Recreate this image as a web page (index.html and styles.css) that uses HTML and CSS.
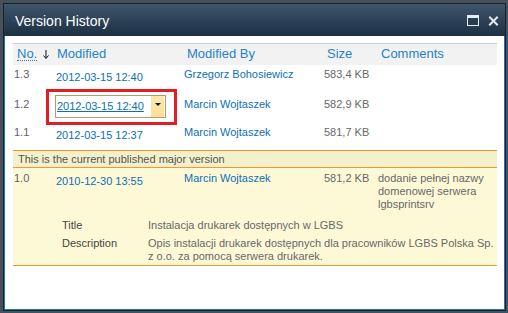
FILE: index.html
```html
<!DOCTYPE html>
<html>
<head>
<meta charset="utf-8">
<link rel="stylesheet" href="styles.css">
</head>
<body>
<div class="dialog">
  <div class="titlebar">
    <span class="title">Version History</span>
    <div class="tools">
      <svg class="ico-max" width="12" height="11" viewBox="0 0 12 11">
        <rect x="0.5" y="0.5" width="11" height="10" fill="#2a3d50" stroke="#e8ecf0" stroke-width="1"/>
        <rect x="1" y="1" width="10" height="2" fill="#e8ecf0"/>
      </svg>
      <svg class="ico-close" width="11" height="10" viewBox="0 0 11 10">
        <path d="M2 1.5 L9 8.5 M9 1.5 L2 8.5" stroke="#e6e9ec" stroke-width="2" stroke-linecap="square"/>
      </svg>
    </div>
  </div>
  <div class="content">
    <table class="versions">
      <colgroup>
        <col class="w-no"><col class="w-mod"><col class="w-by"><col class="w-size"><col class="w-com">
      </colgroup>
      <thead>
        <tr class="hdr">
          <th class="h-no"><span class="no">No.</span><svg class="sort" width="6" height="9" viewBox="0 0 6 9"><path d="M3 0 V8 M0.5 5.5 L3 8.5 L5.5 5.5" stroke="#111" stroke-width="1" fill="none"/></svg></th>
          <th class="h-mod">Modified</th>
          <th class="h-by">Modified By</th>
          <th class="h-size">Size</th>
          <th class="h-com">Comments</th>
        </tr>
      </thead>
      <tbody>
        <tr class="row r1">
          <td class="ver">1.3</td>
          <td class="date"><a>2012-03-15 12:40</a></td>
          <td class="by"><a>Grzegorz Bohosiewicz</a></td>
          <td class="size">583,4 KB</td>
          <td class="com"></td>
        </tr>
        <tr class="row r2">
          <td class="ver">1.2</td>
          <td class="date">
            <span class="hover">
              <a class="ul">2012-03-15 12:40</a>
              <span class="menu-btn"><span class="tri"></span></span>
              <span class="mark"></span>
            </span>
          </td>
          <td class="by"><a>Marcin Wojtaszek</a></td>
          <td class="size">582,9 KB</td>
          <td class="com"></td>
        </tr>
        <tr class="row r3">
          <td class="ver">1.1</td>
          <td class="date"><a>2012-03-15 12:37</a></td>
          <td class="by"><a>Marcin Wojtaszek</a></td>
          <td class="size">581,7 KB</td>
          <td class="com"></td>
        </tr>
        <tr class="spacer"><td colspan="5"></td></tr>
        <tr class="band"><td colspan="5">This is the current published major version</td></tr>
        <tr class="row major">
          <td class="ver">1.0</td>
          <td class="date"><a>2010-12-30 13:55</a></td>
          <td class="by"><a>Marcin Wojtaszek</a></td>
          <td class="size">581,2 KB</td>
          <td class="com">dodanie pełnej nazwy domenowej serwera lgbsprintsrv</td>
        </tr>
        <tr class="props">
          <td colspan="5">
            <div class="props-grid">
              <div class="lbl">Title</div>
              <div class="val">Instalacja drukarek dostępnych w LGBS</div>
              <div class="lbl">Description</div>
              <div class="val">Opis instalacji drukarek dostępnych dla pracowników LGBS Polska Sp. z o.o. za pomocą serwera drukarek.</div>
            </div>
          </td>
        </tr>
      </tbody>
    </table>
  </div>
</div>
</body>
</html>
```

FILE: styles.css
```css
* { box-sizing: border-box; }
html, body { margin: 0; padding: 0; }
body {
  width: 508px;
  height: 313px;
  background: #46515c;
  font-family: "Liberation Sans", Arial, sans-serif;
  overflow: hidden;
}
.dialog {
  margin: 3px 0 0 3px;
  width: 503px;
  height: 308px;
  border: 1px solid #17222d;
  display: flex;
  flex-direction: column;
}
.titlebar {
  height: 32px;
  flex: none;
  background: linear-gradient(#3f556a, #1d3044);
  display: flex;
  align-items: center;
  justify-content: space-between;
  padding: 0 6px 0 11px;
}
.title {
  color: #fff;
  font-size: 14px;
  margin-top: 2px;
}
.tools {
  display: flex;
  align-items: center;
  gap: 9px;
  margin-top: 1px;
}
.ico-max, .ico-close { display: block; }
.content {
  flex: 1;
  background: #fff;
  border: 1px solid #1b77c0;
  border-top: none;
  padding: 7px 7px 0 8px;
}
.versions {
  width: 484px;
  table-layout: fixed;
  border-collapse: collapse;
  font-size: 11px;
  line-height: 13px;
}
.w-no { width: 37px; }
.w-mod { width: 130px; }
.w-by { width: 140px; }
.w-size { width: 54px; }
.w-com { width: 123px; }
.versions td, .versions th { padding: 0; vertical-align: top; text-align: left; }
.hdr th {
  background: #f2f2f2;
  border-top: 1px solid #c5ced8;
  height: 21px;
  font-weight: normal;
  font-size: 13px;
  line-height: 20px;
  color: #2482cc;
  white-space: nowrap;
}
.h-no { padding-left: 4px !important; }
.no { border-bottom: 1px dotted #2482cc; line-height: 13px; display: inline-block; }
.sort { margin-left: 6px; vertical-align: -1px; }
.h-mod { padding-left: 7px !important; }
.h-by { padding-left: 7px !important; }
.h-size { padding-left: 7px !important; }
.h-com { padding-left: 7px !important; }
a { color: #0a6fba; text-decoration: none; }
.ver { color: #5e5e6e; padding-left: 1px !important; }
.date { padding-left: 6px !important; }
.by { padding-left: 4px !important; white-space: nowrap; }
.size { padding-left: 4px !important; color: #686868; white-space: nowrap; }
.com { padding-left: 4px !important; color: #686868; }
.r1 { height: 26px; }
.r1 td { padding-top: 3px; }
.r1 .date { padding-top: 6px; }
.r2 { height: 30px; }
.r2 td { padding-top: 7px; }
.r2 .date { padding-top: 4px; }
.r3 { height: 28px; }
.r3 td { padding-top: 5px; }
.r3 .date { padding-top: 8px; }
.spacer { height: 2px; }
.hover {
  position: relative;
  display: inline-flex;
  align-items: stretch;
  margin-left: -1px;
  width: 111px;
  height: 23px;
  border: 1px solid #b39b6e;
  padding: 0 1px 0 1px;
}
.hover .ul {
  text-decoration: underline;
  align-self: center;
  flex: 1;
  margin-top: 1px;
}
.menu-btn {
  width: 13px;
  background: linear-gradient(#fee9b0, #fddf96);
  display: flex;
  align-items: center;
  justify-content: center;
}
.tri {
  width: 0;
  height: 0;
  border-left: 3px solid transparent;
  border-right: 3px solid transparent;
  border-top: 3px solid #111;
  margin-top: -3px;
}
.mark {
  position: absolute;
  left: -10px;
  top: -7px;
  width: 131px;
  height: 36px;
  border: 3px solid #e41c24;
}
.band td {
  background: #f4f0cb;
  border-top: 1px solid #f7962a;
  border-bottom: 1px solid #f7962a;
  color: #555;
  height: 17px;
  padding: 1px 0 0 5px;
  line-height: 14px;
}
.major td {
  background: #fdf9d6;
  padding-top: 4px;
  padding-bottom: 2px;
}
.major .date { padding-top: 7px; }
.props td {
  background: #fdf9d6;
  border-bottom: 1px solid #f7962a;
  padding: 6px 0 2px 49px;
}
.props-grid {
  display: grid;
  grid-template-columns: 86px 346px;
  row-gap: 5px;
}
.lbl { color: #444; }
.val { color: #686868; }
```
